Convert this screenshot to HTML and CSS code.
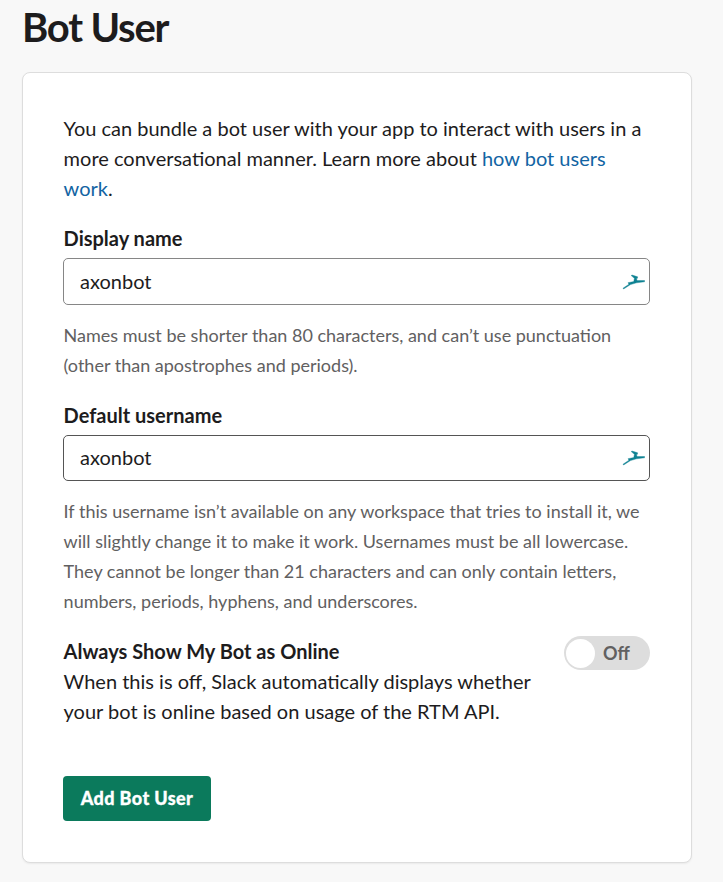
FILE: index.html
```html
<!DOCTYPE html>
<html lang="en">
<head>
<meta charset="utf-8">
<title>Bot User</title>
<link rel="stylesheet" href="styles.css">
</head>
<body>
<h1>Bot User</h1>
<main class="card">
  <p class="intro">You can bundle a bot user with your app to interact with users in a<br>more conversational manner. Learn more about <a>how bot users<br>work</a>.</p>
  <section class="field">
    <h2>Display name</h2>
    <div class="input"><span>axonbot</span><svg class="bird" viewBox="0 0 24 18"><path d="M2 15.2 L8 11.2 L7 9.7 L12.8 8.6 L13.4 5.3 L10.2 2.6 L11 2 L16.6 3.8 L16.5 5.2 L15.5 5.6 L16 7.6 L23.6 7.5 L23.6 8.8 L15.5 9.8 L9.5 11.6 L2.6 16Z"/></svg></div>
    <p class="hint">Names must be shorter than 80 characters, and can’t use punctuation<br>(other than apostrophes and periods).</p>
  </section>
  <section class="field second">
    <h2>Default username</h2>
    <div class="input"><span>axonbot</span><svg class="bird" viewBox="0 0 24 18"><path d="M2 15.2 L8 11.2 L7 9.7 L12.8 8.6 L13.4 5.3 L10.2 2.6 L11 2 L16.6 3.8 L16.5 5.2 L15.5 5.6 L16 7.6 L23.6 7.5 L23.6 8.8 L15.5 9.8 L9.5 11.6 L2.6 16Z"/></svg></div>
    <p class="hint">If this username isn’t available on any workspace that tries to install it, we<br>will slightly change it to make it work. Usernames must be all lowercase.<br>They cannot be longer than 21 characters and can only contain letters,<br>numbers, periods, hyphens, and underscores.</p>
  </section>
  <section class="online">
    <div><h2>Always Show My Bot as Online</h2>
    <p>When this is off, Slack automatically displays whether<br>your bot is online based on usage of the RTM API.</p></div>
    <div class="toggle"><i></i><span>Off</span></div>
  </section>
  <button>Add Bot User</button>
</main>
</body>
</html>
```
FILE: styles.css
```css
* { box-sizing: border-box; }
body { margin: 0; height: 882px; padding: 2px 31px 0 22px; background: #f8f8f8; color: #1d1c1d; font: 20px/30px Lato, sans-serif; overflow: hidden; }
h1, h2, p { margin: 0; }
h1 { font-size: 40px; line-height: 50px; font-weight: 700; letter-spacing: -1.2px; }
.card { margin-top: 20px; height: 791px; padding: 40px 41px 0 40px; background: #fff; border: 1px solid #ddd; border-radius: 8px; box-shadow: 0 1px 2px rgba(0, 0, 0, .06); }
p, h2 { white-space: nowrap; padding-left: .6px; }
a { color: #1264a3; }
h2 { font-size: 20px; line-height: 30px; font-weight: 700; }
.field { margin-top: 20px; }
.input { display: flex; align-items: center; justify-content: space-between; height: 47px; margin-top: 5px; padding: 0 4px 0 16px; border: 1px solid #868686; border-radius: 5px; }
.input span { padding-bottom: 2px; }
.second .input { height: 46px; border-color: #555; }
.bird { width: 24px; height: 18px; fill: #0e8292; stroke: #0e8292; stroke-width: .4; }
.hint { margin-top: 15px; font-size: 18px; color: #616061; }
.online { display: flex; justify-content: space-between; margin-top: 20px; }
.toggle { display: flex; align-items: center; width: 86px; height: 34px; border-radius: 17px; background: #ddd; padding: 2px; font-size: 18px; font-weight: 700; color: #616061; }
.toggle i { width: 29px; height: 29px; border-radius: 50%; background: #fff; margin-right: 8px; }
.toggle span { padding-bottom: 1px; }
button { margin-top: 50px; width: 148px; height: 45px; padding: 0 0 2px; border: 0; border-radius: 4px; background: #0b7a5c; color: #fff; font: 900 18px/30px Lato, sans-serif; letter-spacing: .4px; -webkit-text-stroke: .3px #fff; }
```
